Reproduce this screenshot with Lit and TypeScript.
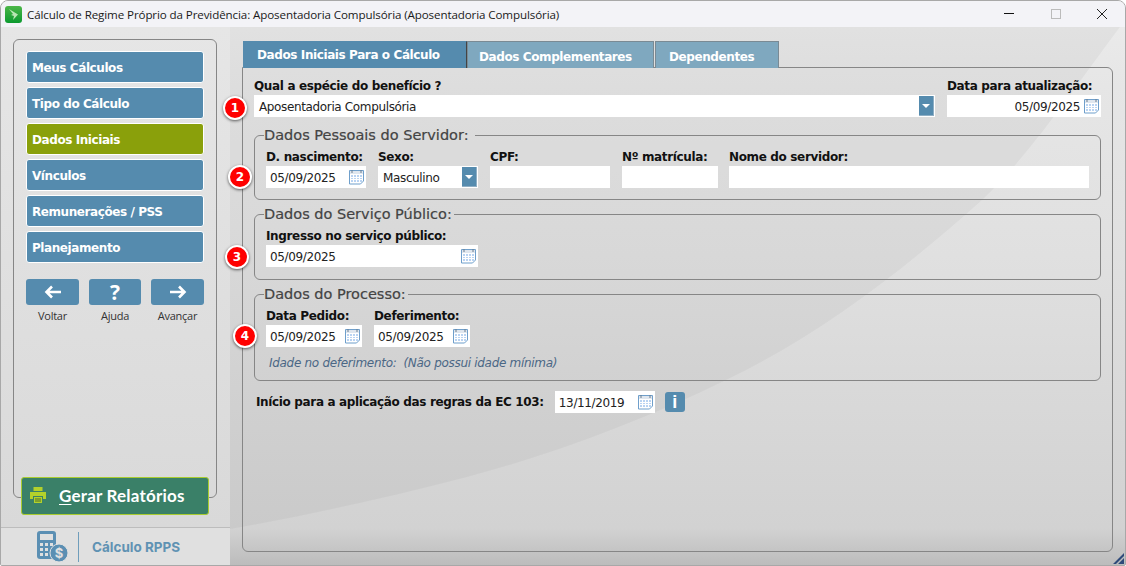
import { LitElement, html, css } from "lit";
import { customElement } from "lit/decorators.js";

const calIcon = html`<svg class="cal" width="15" height="16" viewBox="0 0 15 16"><path d="M.5 1.500h14v10.500l-3 3h-11z" fill="#fff" stroke="#6f9fcb"/><rect x="1" y="2" width="13" height="3" fill="#dfe6ee"/><path d="M3 1v3M12 1v3" stroke="#6b7c8e"/><path d="M2 6h11v7H2z" fill="#b9d3f2"/><path d="M2 8.500h11M2 10.500h11M4.500 6v7M7.500 6v7M10.500 6v7" stroke="#fff"/></svg>`;
const arrow = html`<span class="drop"><svg width="8" height="4" viewBox="0 0 8 4"><path d="M0 0h8L4 4z" fill="#fff"/></svg></span>`;

@customElement("app-root")
export class AppRoot extends LitElement {
  static styles = css`
    :host { display: block; width: 1126px; height: 566px; overflow: hidden; font-family: "DejaVu Sans", sans-serif; color: #111; }
    * { box-sizing: border-box; }
    .win { position: relative; width: 1126px; height: 566px; border: 1px solid #a8a8a8; border-radius: 8px 8px 2px 2px; overflow: hidden; display: flex; flex-direction: column; background: linear-gradient(#ececec 0, #e6e6e6 15%, #e0e0e0 45%, #d8d8d8 72%, #d2d2d2 93.500%, #bcbcbc 100%); }
    .swoosh { position: absolute; left: -1px; top: -1px; pointer-events: none; }
    .title { position: relative; height: 26px; flex: none; background: #f3f3f7; display: flex; align-items: center; padding-left: 4px; font: 11.600px "Open Sans", sans-serif; color: #1a1a1a; }
    .logo { width: 17px; height: 17px; margin-right: 5px; flex: none; }
    .title .t { flex: 1; white-space: nowrap; letter-spacing: -0.11px; }
    .ctl { display: flex; align-items: center; }
    .ctl svg { display: block; }
    .ctl span { width: 46px; height: 26px; display: flex; align-items: center; justify-content: center; }
    .body { position: relative; flex: 1; display: flex; min-height: 0; }
    .side { width: 229px; flex: none; display: flex; flex-direction: column; background: linear-gradient(#e6e6e6, #d8d8d8); }
    .sidebox { margin: 12px 12px 0 12px; width: 204px; height: 459px; border: 1px solid #868686; border-radius: 6px; padding: 11px 12px 0 12px; display: flex; flex-direction: column; }
    .menu { display: flex; flex-direction: column; gap: 4px; }
    .mi { height: 32px; background: #558bae; border: 1px solid #fff; border-radius: 3px; color: #fff; font-weight: 700; font-size: 12px; letter-spacing: -0.42px; display: flex; align-items: center; padding: 2px 0 0 5px; }
    .mi.on { background: #8aa00b; }
    .nav { margin-top: 16px; display: flex; justify-content: space-between; }
    .nv { width: 53px; display: flex; flex-direction: column; align-items: center; font: 11px "Open Sans", sans-serif; color: #333; letter-spacing: -0.25px; }
    .nv b { width: 100%; height: 26px; background: #558bae; border-radius: 3px; margin-bottom: 3px; display: flex; align-items: center; justify-content: center; color: #fff; }
    .nv b.q { font-size: 21px; }
    .nv.mid { width: 52px; }
    .gerar { position: relative; z-index: 1; margin: -21px 0 0 20px; height: 38px; width: 188px; background: #3a8068; border: 1px solid #a9cb2f; border-radius: 3px; display: flex; align-items: center; padding-left: 8px; padding-bottom: 2px; color: #fff; font: 700 17px Lato, sans-serif; letter-spacing: 0.2px; }
    .gerar svg { margin-right: 13px; }
    .gerar u { text-underline-offset: 2px; }
    .foot { margin-top: auto; height: 38px; background: #e0e0e0; border-top: 1px solid #bdbdbd; display: flex; align-items: center; padding-left: 36px; }
    .foot i { width: 1px; height: 30px; background: #6f9dbb; margin: 0 13px 0 10px; }
    .foot span { font: 700 13.500px Inter, sans-serif; color: #5f92b3; }
    .main { position: relative; flex: 1; padding: 14px 12px 0 12px; display: flex; flex-direction: column; }
    .tabs { display: flex; height: 27px; position: relative; z-index: 1; margin: 0 0 -1px 1px; }
    .tab { height: 100%; display: flex; align-items: center; padding: 3px 0 0 11px; color: #fff; font-weight: 700; font-size: 12px; letter-spacing: -0.4px; background: #7fa8bf; border: 1px solid #7a8a94; border-bottom: none; }
    .tab.on { background: #558bae; padding: 0 0 0 13px; border-color: #558bae #444 #558bae #558bae; }
    .tab.c { margin-right: 1px; }
    .tab.d { padding-left: 13px; }
    .panel { height: 485px; border: 1px solid #868686; border-radius: 0 6px 6px 6px; padding: 10px 11px 0 11px; display: flex; flex-direction: column; }
    label { display: block; font-weight: 700; font-size: 12px; letter-spacing: -0.35px; line-height: 17px; height: 17px; color: #111; white-space: nowrap; }
    .top { display: flex; gap: 12px; }
    .grow { flex: 1; }
    .inp { height: 22px; background: #fff; font: 12px "DejaVu Sans", sans-serif; letter-spacing: -0.36px; color: #222; display: flex; align-items: center; padding: 0 2px 0 4px; white-space: nowrap; }
    .inp span { padding-top: 2px; }
    .inp span.v { flex: 1; }
    .inp.r span.v { text-align: right; padding-right: 4px; }
    .inp.s { padding-left: 5px; }
    .cal { flex: none; }
    .inp .drop { padding-top: 0; width: 15px; height: 20px; background: #558bae; border-right: 1px solid #8eaec4; border-bottom: 1px solid #8eaec4; display: flex; align-items: center; justify-content: center; flex: none; margin-right: -1px; margin-left: auto; }
    fieldset { margin: 0; min-width: 0; border: 1px solid #868686; border-radius: 6px; padding: 0 11px; }
    legend { padding: 0 2px 0 0; margin-left: -2px; font-size: 14.500px; line-height: 16px; color: #444; -webkit-text-stroke: 0.2px #444; }
    .f1 { margin-top: 10px; height: 73px; }
    .f1 legend { padding-right: 6px; }
    .f2 { margin-top: 6px; height: 74px; }
    .f3 { margin-top: 6px; height: 95px; }
    .row { display: flex; gap: 12px; padding-top: 6px; }
    .row .m { margin-right: -1px; }
    .note { margin-top: 9px; padding-left: 3px; font-style: italic; font-size: 12px; letter-spacing: -0.3px; color: #4b6785; }
    .bottom { margin-top: 10px; display: flex; align-items: center; padding-left: 2px; }
    .bottom label { height: auto; margin-right: 11px; }
    .info { width: 20px; height: 20px; margin-left: 10px; border-radius: 3px; background: #558bae; color: #fff; font: 700 18px "Liberation Sans", sans-serif; display: flex; align-items: center; justify-content: center; }
    .badge { position: absolute; width: 24px; height: 24px; border-radius: 50%; background: #f00; border: 2px solid #fff; box-shadow: 0 1px 3px rgba(0,0,0,.6); color: #fff; font-weight: 700; font-size: 12px; display: flex; align-items: center; justify-content: center; z-index: 2; }
    .grip { position: absolute; right: 1px; bottom: 1px; }
  `;

  private field(l: string, w: number, content: unknown, cls = "") {
    return html`<div class=${cls} style="width:${w}px"><label>${l}</label>${content}</div>`;
  }
  private date(v: string) {
    return html`<div class="inp"><span class="v">${v}</span>${calIcon}</div>`;
  }

  render() {
    return html`<div class="win">
      <svg class="swoosh" width="1126" height="566" viewBox="0 0 1126 566">
        <path d="M230 27H1120C1080 80 1030 155 982 200C900 273 820 335 726 380C640 422 550 455 467 477C390 497 310 515 230 529Z" fill="#000" opacity="0.035"/>
      </svg>
      <div class="title">
        <svg class="logo" viewBox="0 0 17 17"><defs><linearGradient id="g" x1="0" y1="0" x2="0" y2="1"><stop offset="0" stop-color="#4cb648"/><stop offset="1" stop-color="#0c9a30"/></linearGradient></defs><rect width="17" height="17" rx="3" fill="url(#g)"/><path d="M4 3l9 5.500-5 5.500 1-4-3-1 2-1z" fill="#b9e6b4"/></svg>
        <span class="t">Cálculo de Regime Próprio da Previdência: Aposentadoria Compulsória (Aposentadoria Compulsória)</span>
        <div class="ctl">
          <span><svg width="12" height="2"><rect width="10" height="1" fill="#111"/></svg></span>
          <span><svg width="11" height="11"><rect x=".5" y=".5" width="9" height="9" fill="none" stroke="#bbb"/></svg></span>
          <span><svg width="12" height="12" viewBox="0 0 12 12"><path d="M1 1l10 10M11 1L1 11" stroke="#222" fill="none"/></svg></span>
        </div>
      </div>
      <div class="body">
        <div class="side">
          <div class="sidebox">
            <div class="menu">
              <div class="mi">Meus Cálculos</div>
              <div class="mi">Tipo do Cálculo</div>
              <div class="mi on">Dados Iniciais</div>
              <div class="mi">Vínculos</div>
              <div class="mi">Remunerações / PSS</div>
              <div class="mi">Planejamento</div>
            </div>
            <div class="nav">
              <div class="nv"><b><svg width="18" height="14" viewBox="0 0 18 14"><path d="M17 7H3M8 1.500L2.500 7 8 12.500" fill="none" stroke="#fff" stroke-width="2.600"/></svg></b>Voltar</div>
              <div class="nv mid"><b class="q">?</b>Ajuda</div>
              <div class="nv"><b><svg width="18" height="14" viewBox="0 0 18 14"><path d="M1 7h14M10 1.500L15.500 7 10 12.500" fill="none" stroke="#fff" stroke-width="2.600"/></svg></b>Avançar</div>
            </div>
          </div>
          <div class="gerar">
            <svg width="16" height="16" viewBox="0 0 16 16"><path d="M3.500 0h9v4h-9zM0 5h16v7h-3V9H3v3H0zM4 10h8v6H4z" fill="#b3d12b"/><path d="M5 11h6v4H5z" fill="#7f9f2c"/></svg>
            <span><u>G</u>erar Relatórios</span>
          </div>
          <div class="foot">
            <svg width="31" height="31" viewBox="0 0 31 31"><rect x="0" y="0" width="19" height="28" rx="3" fill="#5b8fb3"/><rect x="3" y="3" width="13" height="6" fill="#e0e0e0"/><path d="M3 12h3v3H3zM8 12h3v3H8zM13 12h3v3h-3zM3 17h3v3H3zM8 17h3v3H8zM3 22h3v3H3zM8 22h3v3H8z" fill="#e0e0e0"/><circle cx="22" cy="22" r="9" fill="#5b8fb3" stroke="#e0e0e0"/><text x="22" y="27" text-anchor="middle" font-size="13" font-weight="700" font-family="Inter" fill="#e0e0e0">$</text></svg>
            <i></i><span>Cálculo RPPS</span>
          </div>
        </div>
        <div class="main">
          <div class="tabs">
            <div class="tab on" style="width:224px">Dados Iniciais Para o Cálculo</div>
            <div class="tab c" style="width:187px">Dados Complementares</div>
            <div class="tab d" style="width:124px">Dependentes</div>
          </div>
          <div class="panel">
            <div class="top">
              <div class="grow"><label>Qual a espécie do benefício ?</label>
                <div class="inp s"><span>Aposentadoria Compulsória</span>${arrow}</div></div>
              <div style="width:154px"><label>Data para atualização:</label>
                <div class="inp r"><span class="v">05/09/2025</span>${calIcon}</div></div>
            </div>
            <fieldset class="f1"><legend>Dados Pessoais do Servidor:</legend>
              <div class="row">
                ${this.field("D. nascimento:", 100, this.date("05/09/2025"))}
                ${this.field("Sexo:", 100, html`<div class="inp s"><span>Masculino</span>${arrow}</div>`)}
                ${this.field("CPF:", 120, html`<div class="inp"></div>`)}
                ${this.field("Nº matrícula:", 96, html`<div class="inp"></div>`, "m")}
                <div class="grow"><label>Nome do servidor:</label><div class="inp"></div></div>
              </div>
            </fieldset>
            <fieldset class="f2"><legend>Dados do Serviço Público:</legend>
              <div class="row">${this.field("Ingresso no serviço público:", 212, this.date("05/09/2025"))}</div>
            </fieldset>
            <fieldset class="f3"><legend>Dados do Processo:</legend>
              <div class="row">
                ${this.field("Data Pedido:", 96, this.date("05/09/2025"))}
                ${this.field("Deferimento:", 96, this.date("05/09/2025"))}
              </div>
              <div class="note">Idade no deferimento:&nbsp; (Não possui idade mínima)</div>
            </fieldset>
            <div class="bottom">
              <label>Início para a aplicação das regras da EC 103:</label>
              <div style="width:100px">${this.date("13/11/2019")}</div>
              <div class="info">i</div>
            </div>
          </div>
        </div>
        <div class="badge" style="left:222px;top:69px">1</div>
        <div class="badge" style="left:227px;top:138px">2</div>
        <div class="badge" style="left:224px;top:218px">3</div>
        <div class="badge" style="left:232px;top:297px">4</div>
        <svg class="grip" width="11" height="11" viewBox="0 0 11 11"><path d="M0 11L11 0v11zM3 11h2l6-6V3z" fill="#2f4a7a"/></svg>
      </div>
    </div>`;
  }
}
